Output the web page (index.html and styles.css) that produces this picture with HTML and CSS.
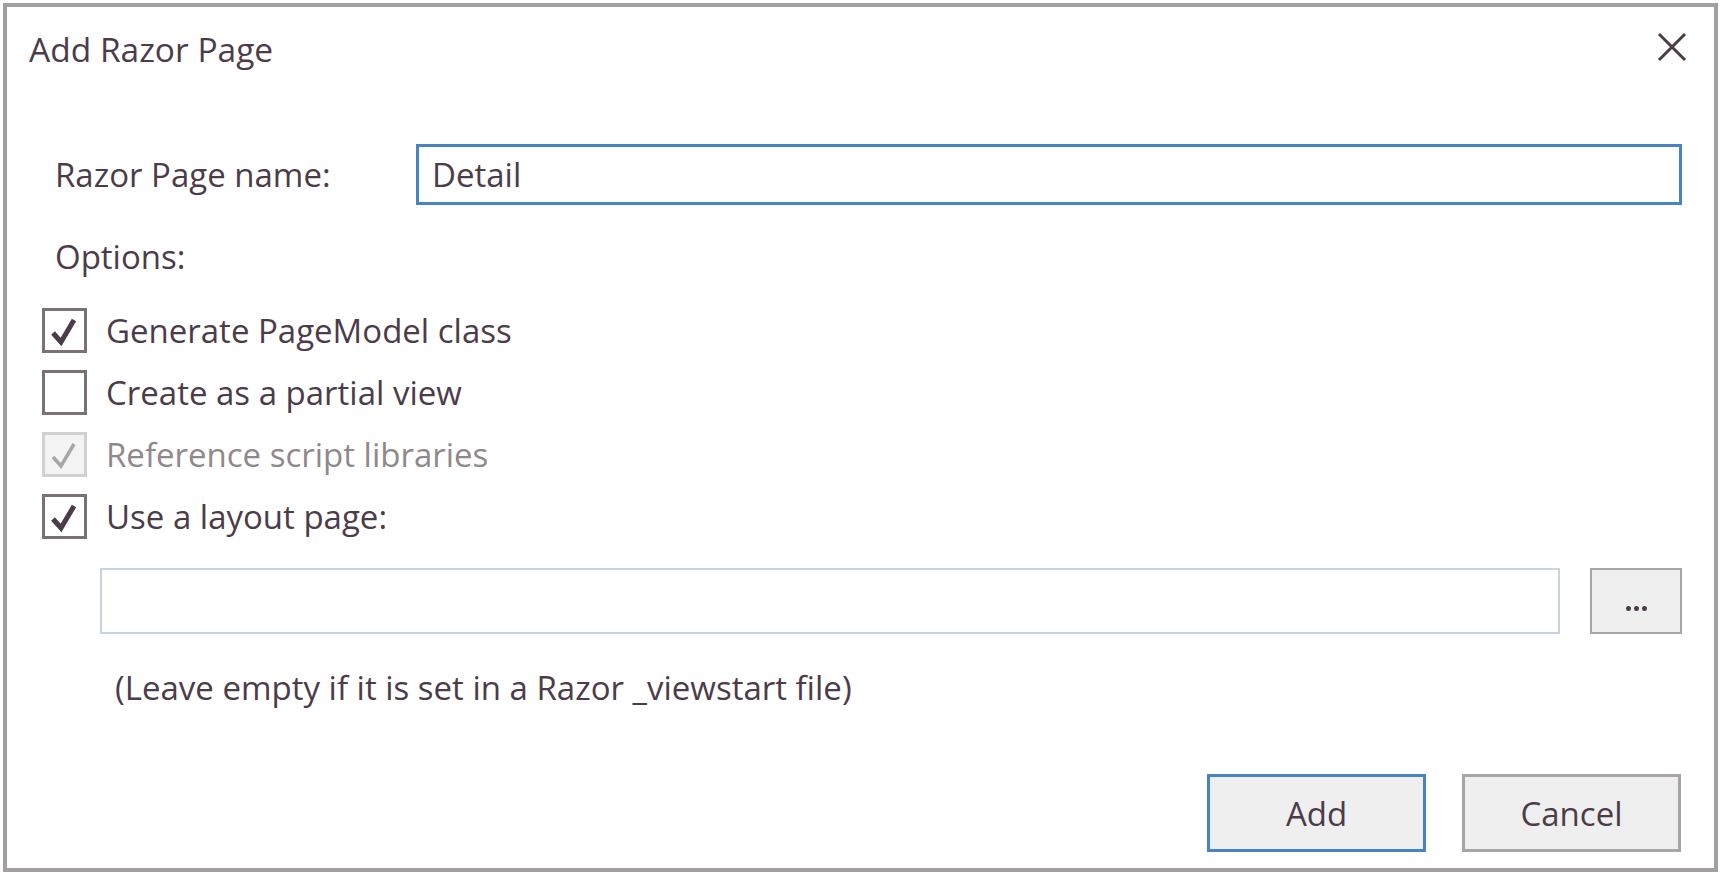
FILE: index.html
```html
<!DOCTYPE html>
<html lang="en">
<head>
<meta charset="utf-8">
<title>Add Razor Page</title>
<link rel="stylesheet" href="styles.css">
</head>
<body>
<div class="dialog">
  <header class="titlebar">
    <h1 class="title">Add Razor Page</h1>
    <button class="close" aria-label="Close">
      <svg viewBox="0 0 30 30" width="30" height="30"><path d="M2 2 L28 28 M28 2 L2 28" stroke="#4c3c4a" stroke-width="3" fill="none"/></svg>
    </button>
  </header>
  <main class="content">
    <div class="name-row">
      <label class="name-label">Razor Page name:</label>
      <div class="textbox focused">Detail</div>
    </div>
    <div class="options-label">Options:</div>
    <ul class="checks">
      <li class="check">
        <span class="box"><svg viewBox="0 0 45 45"><path d="M11 25 L19 34 L32 12" /></svg></span>
        <span class="check-text">Generate PageModel class</span>
      </li>
      <li class="check">
        <span class="box"></span>
        <span class="check-text">Create as a partial view</span>
      </li>
      <li class="check disabled">
        <span class="box"><svg viewBox="0 0 45 45"><path d="M11 25 L19 34 L32 12" /></svg></span>
        <span class="check-text">Reference script libraries</span>
      </li>
      <li class="check">
        <span class="box"><svg viewBox="0 0 45 45"><path d="M11 25 L19 34 L32 12" /></svg></span>
        <span class="check-text">Use a layout page:</span>
      </li>
    </ul>
    <div class="layout-row">
      <div class="textbox plain"></div>
      <button class="browse" aria-label="Browse"><span class="dot"></span><span class="dot"></span><span class="dot"></span></button>
    </div>
    <p class="hint">(Leave empty if it is set in a Razor _viewstart file)</p>
  </main>
  <footer class="actions">
    <button class="btn primary">Add</button>
    <button class="btn">Cancel</button>
  </footer>
</div>
</body>
</html>
```

FILE: styles.css
```css
html, body {
  margin: 0;
  padding: 0;
  background: #ffffff;
}

body {
  font-family: "Open Sans", "Noto Sans", sans-serif;
  font-size: 33px;
  font-weight: 500;
  color: #4c3c4a;
}

.dialog {
  margin: 3px;
  width: 1715px;
  height: 869px;
  box-sizing: border-box;
  border: 4px solid #a39f9f;
  background: #ffffff;
  display: flex;
  flex-direction: column;
}

.titlebar {
  height: 84px;
  display: flex;
  align-items: center;
  justify-content: space-between;
  padding: 0 27px 0 22px;
}

.title {
  margin: 0;
  font-size: 33.5px;
  font-weight: 500;
  line-height: 84px;
}

.close {
  width: 30px;
  height: 30px;
  padding: 0;
  border: 0;
  background: transparent;
  display: block;
  margin-top: -4px;
}

.close svg {
  display: block;
}

.content {
  padding: 53px 32px 0 35px;
  display: flex;
  flex-direction: column;
}

.name-row {
  display: flex;
  align-items: center;
}

.name-label {
  flex: 0 0 361px;
  margin-left: 13px;
  line-height: 61px;
}

.textbox {
  box-sizing: border-box;
  background: #ffffff;
}

.textbox.focused {
  flex: 1;
  height: 61px;
  border: 3px solid #4784c4;
  padding-left: 13px;
  line-height: 55px;
}

.options-label {
  margin: 32px 0 0 13px;
  line-height: 40px;
}

.checks {
  list-style: none;
  margin: 22px 0 0 0;
  padding: 0;
}

.check {
  height: 62px;
  display: flex;
  align-items: center;
}

.box {
  width: 45px;
  height: 45px;
  box-sizing: border-box;
  border: 3px solid #7b7173;
  background: #ffffff;
  display: block;
  position: relative;
}

.box svg {
  position: absolute;
  left: -3px;
  top: -3px;
  width: 45px;
  height: 45px;
  fill: none;
  stroke: #4c3c4a;
  stroke-width: 5;
  stroke-linejoin: miter;
}

.check-text {
  margin-left: 19px;
}

.check.disabled .box {
  border-color: #d2d0d1;
  background: #f3f3f3;
}

.check.disabled .box svg {
  stroke: #aaa5a7;
  stroke-width: 3.5;
}

.check.disabled .check-text {
  color: #8f898c;
}

.layout-row {
  margin: 21px 0 0 58px;
  display: flex;
  gap: 30px;
}

.textbox.plain {
  flex: 1;
  height: 66px;
  border: 2px solid #c8d4e2;
}

.browse {
  flex: 0 0 92px;
  height: 66px;
  box-sizing: border-box;
  border: 2px solid #aaa5a5;
  background: #efefef;
  padding: 14px 0 0 0;
  display: flex;
  align-items: center;
  justify-content: center;
  gap: 3px;
}

.dot {
  width: 5px;
  height: 5px;
  border-radius: 50%;
  background: #4c3c4a;
  display: block;
}

.hint {
  margin: 34px 0 0 73px;
  line-height: 40px;
}

.actions {
  margin-top: auto;
  display: flex;
  justify-content: flex-end;
  gap: 36px;
  padding: 0 33px 16px 0;
}

.btn {
  width: 219px;
  height: 78px;
  box-sizing: border-box;
  border: 3px solid #aaa5a5;
  background: #efefef;
  font-family: inherit;
  font-size: 33px;
  font-weight: 500;
  color: #4c3c4a;
  padding: 0;
}

.btn.primary {
  border-color: #4784c4;
}
```
